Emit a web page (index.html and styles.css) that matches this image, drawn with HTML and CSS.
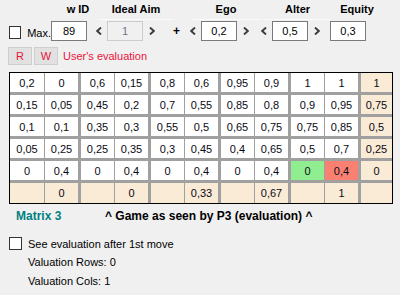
FILE: index.html
```html
<!DOCTYPE html>
<html>
<head>
    <title>Matrix 3</title>
    <link rel="stylesheet" href="styles.css">
</head>
<body>
    <div class="form">
        <div class="heads">
            <span class="head head-id">w ID</span>
            <span class="head head-aim">Ideal Aim</span>
            <span class="head head-ego">Ego</span>
            <span class="head head-alter">Alter</span>
            <span class="head head-equity">Equity</span>
        </div>

        <div class="controls">
            <label class="check check-max"><span class="box"></span>Max.</label>
            <div class="field">89</div>
            <div class="spinner spin-aim">
                <svg class="arrow" width="6" height="8" viewBox="0 0 6 8"><polyline points="5,0.5 1.2,4 5,7.5"/></svg>
                <div class="field disabled">1</div>
                <svg class="arrow" width="6" height="8" viewBox="0 0 6 8"><polyline points="1,0.5 4.8,4 1,7.5"/></svg>
            </div>
            <span class="plus">+</span>
            <div class="spinner spin-ego">
                <svg class="arrow" width="6" height="8" viewBox="0 0 6 8"><polyline points="5,0.5 1.2,4 5,7.5"/></svg>
                <div class="field">0,2</div>
                <svg class="arrow" width="6" height="8" viewBox="0 0 6 8"><polyline points="1,0.5 4.8,4 1,7.5"/></svg>
            </div>
            <div class="spinner spin-alter">
                <svg class="arrow" width="6" height="8" viewBox="0 0 6 8"><polyline points="5,0.5 1.2,4 5,7.5"/></svg>
                <div class="field">0,5</div>
                <svg class="arrow" width="6" height="8" viewBox="0 0 6 8"><polyline points="1,0.5 4.8,4 1,7.5"/></svg>
            </div>
            <div class="field field-equity">0,3</div>
        </div>

        <div class="actions">
            <button class="btn">R</button>
            <button class="btn">W</button>
            <span class="note">User's evaluation</span>
        </div>

        <div class="matrix" id="matrix"></div>

        <div class="caption">
            <span class="title">Matrix 3</span>
            <span class="subtitle">^ Game as seen by P3 (evaluation) ^</span>
        </div>

        <label class="check check-after"><span class="box"></span>See evaluation after 1st move</label>
        <div class="info">Valuation Rows: 0</div>
        <div class="info">Valuation Cols: 1</div>
    </div>

    <script>
        const rows = [
          ['0,2', '0', '0,6', '0,15', '0,8', '0,6', '0,95', '0,9', '1', '1', '1'],
          ['0,15', '0,05', '0,45', '0,2', '0,7', '0,55', '0,85', '0,8', '0,9', '0,95', '0,75'],
          ['0,1', '0,1', '0,35', '0,3', '0,55', '0,5', '0,65', '0,75', '0,75', '0,85', '0,5'],
          ['0,05', '0,25', '0,25', '0,35', '0,3', '0,45', '0,4', '0,65', '0,5', '0,7', '0,25'],
          ['0', '0,4', '0', '0,4', '0', '0,4', '0', '0,4', '0', '0,4', '0'],
          ['', '0', '', '0', '', '0,33', '', '0,67', '', '1', '']
        ]

        const matrix = document.getElementById('matrix')

        rows.forEach(function (row, r) {
          row.forEach(function (value, c) {
            const cell = document.createElement('div')
            cell.className = 'cell'
            if (c % 2 === 1 && c < 10) cell.classList.add('pair-end')
            if (c === 10 || r === rows.length - 1) cell.classList.add('total')
            if (r === 4 && c === 8) cell.classList.add('best')
            if (r === 4 && c === 9) cell.classList.add('worst')
            cell.textContent = value
            matrix.appendChild(cell)
          })
        })
    </script>
</body>
</html>
```

FILE: styles.css
```css
body {
  margin: 0;
  background-color: #f0f0f0;
  font-family: "Liberation Sans", Arial, sans-serif;
  font-size: 11px;
  color: #000;
}
.form {
  width: 400px;
  height: 295px;
  overflow: hidden;
}

/* headers above the inputs */
.heads {
  display: flex;
  height: 20px;
}
.head {
  font-weight: bold;
  text-align: center;
  line-height: 13px;
  padding-top: 3px;
  height: 16px;
}
.head-id {
  margin-left: 60px;
  width: 36px;
}
.head-aim {
  margin-left: 4px;
  width: 72px;
  border-bottom: 1px solid #fbfbfb;
}
.head-ego {
  margin-left: 20px;
  width: 68px;
  border-bottom: 1px solid #fbfbfb;
}
.head-alter {
  margin-left: 5px;
  width: 65px;
  border-bottom: 1px solid #fbfbfb;
}
.head-equity {
  margin-left: 9px;
  width: 36px;
}

/* inputs */
.controls {
  display: flex;
  align-items: center;
  margin-top: 1px;
  height: 20px;
}
.check {
  display: flex;
  align-items: center;
  gap: 6px;
  padding-left: 9px;
}
.box {
  width: 11px;
  height: 11px;
  border: 1px solid #333;
  background-color: #fff;
}
.check-max {
  width: 51px;
  box-sizing: border-box;
  margin-top: 3px;
}
.field {
  width: 36px;
  height: 20px;
  box-sizing: border-box;
  border: 1px solid #7a7a7a;
  background-color: #fff;
  text-align: center;
  line-height: 18px;
}
.field.disabled {
  background-color: #f0f0f0;
  border-color: #cccccc;
  color: #7d6d86;
}
.spinner {
  display: flex;
  align-items: center;
  gap: 5px;
}
.spinner .field {
  margin-right: 1px;
}
.arrow {
  display: block;
  fill: none;
  stroke: #3c3c3c;
  stroke-width: 1.9;
}
.spin-aim {
  margin-left: 9px;
}
.plus {
  margin-left: 18px;
  width: 7px;
  font-weight: bold;
  font-size: 12px;
}
.spin-ego {
  margin-left: 10px;
}
.spin-alter {
  margin-left: 12px;
}
.field-equity {
  margin-left: 10px;
}

/* R / W */
.actions {
  display: flex;
  align-items: center;
  margin-top: 6px;
  padding-left: 8px;
  height: 18px;
}
.btn {
  width: 24px;
  height: 18px;
  padding: 0;
  margin: 0 2px 0 0;
  font-family: "Liberation Sans", Arial, sans-serif;
  font-size: 11px;
  color: #e8143c;
  background-color: #e1e1e1;
  border: 1px solid #cfcfcf;
}
.note {
  margin-left: 3px;
  color: #e8143c;
}

/* the matrix */
.matrix {
  display: grid;
  grid-template-columns: 34px 35px repeat(4, 33px 35px) 1fr;
  grid-template-rows: repeat(5, 19px) 20px;
  column-gap: 1px;
  row-gap: 3px;
  width: 384px;
  box-sizing: border-box;
  margin: 7px 0 0 9px;
  border: 1px solid #000;
  background-color: #a0a0a0;
}
.cell {
  display: flex;
  align-items: center;
  justify-content: center;
  background-color: #fff;
  color: #0a0a14;
}
.cell.pair-end {
  margin-right: 2px;
}
.cell.total {
  background-color: #faebd7;
}
.cell.best {
  background-color: #90ee90;
}
.cell.worst {
  background-color: #fa8072;
}

/* below the matrix */
.caption {
  display: flex;
  margin-top: 5px;
  font-size: 12px;
  font-weight: bold;
  line-height: 14px;
}
.title {
  margin-left: 16px;
  width: 89px;
  color: #008080;
}
.check-after {
  margin-top: 14px;
  height: 13px;
}
.info {
  padding-left: 28px;
  margin-top: 6px;
  line-height: 13px;
}
```
